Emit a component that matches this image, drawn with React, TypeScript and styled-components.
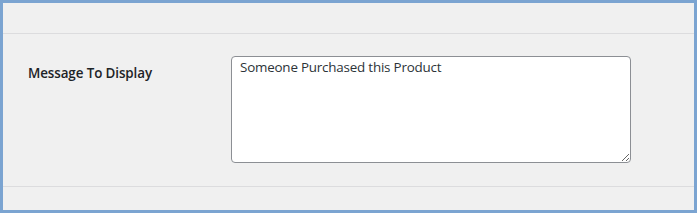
import React from 'react';
import styled, { createGlobalStyle } from 'styled-components';

const GlobalStyle = createGlobalStyle`
  html, body {
    margin: 0;
    padding: 0;
    background: #7ba4d1;
  }
`;

const Frame = styled.div`
  box-sizing: border-box;
  width: 697px;
  height: 213px;
  border: 3px solid #7ba4d1;
  background: #f0f0f0;
  display: flex;
  flex-direction: column;
  font-family: 'Open Sans', 'Noto Sans', sans-serif;
  color: #1d2327;
`;

const TopGap = styled.div`
  height: 30px;
  border-bottom: 1px solid #dcdcde;
`;

const Row = styled.div`
  display: flex;
  align-items: flex-start;
  padding: 22px 0 23px 25px;
  border-bottom: 1px solid #dcdcde;
`;

const Label = styled.label`
  width: 203px;
  padding-top: 7px;
  font-size: 13.4px;
  font-weight: 600;
  line-height: 20px;
  letter-spacing: -0.1px;
`;

const Message = styled.textarea`
  box-sizing: border-box;
  width: 400px;
  height: 107px;
  margin: 0;
  padding: 0 8px;
  border: 1px solid #8c8f94;
  border-radius: 4px;
  background: #fff;
  font-family: 'Open Sans', 'Noto Sans', sans-serif;
  font-size: 13.4px;
  letter-spacing: -0.2px;
  line-height: 20px;
  color: #2c3338;
  resize: both;
  outline: none;
`;

export default function App() {
  return (
    <>
      <GlobalStyle />
      <Frame>
        <TopGap />
        <Row>
          <Label htmlFor="msg">Message To Display</Label>
          <Message id="msg" defaultValue="Someone Purchased this Product" />
        </Row>
      </Frame>
    </>
  );
}
